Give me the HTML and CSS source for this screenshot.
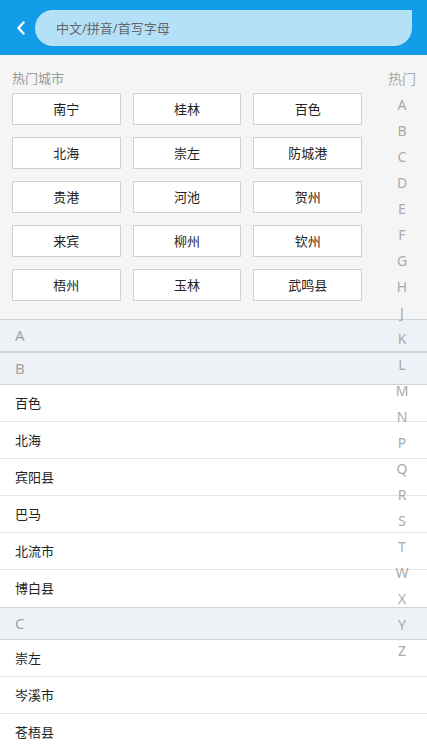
FILE: index.html
```html
<!DOCTYPE html>
<html lang="zh-CN">
<head>
    <meta charset="UTF-8">
    <meta name="viewport" content="width=device-width, initial-scale=1.0">
    <title>选择城市</title>
    <link rel="stylesheet" href="styles.css">
</head>
<body>
    <header class="topbar">
        <span class="back">
            <svg width="10" height="14" viewBox="0 0 10 14"><path d="M7.5 1.5 L2.5 7 L7.5 12.5" fill="none" stroke="#fff" stroke-width="2.4" stroke-linecap="round" stroke-linejoin="round"/></svg>
        </span>
        <div class="search">中文/拼音/首写字母</div>
    </header>

    <section class="hot">
        <div class="hot-title">热门城市</div>
        <div class="hot-grid">
            <div class="city-btn">南宁</div>
            <div class="city-btn">桂林</div>
            <div class="city-btn">百色</div>
            <div class="city-btn">北海</div>
            <div class="city-btn">崇左</div>
            <div class="city-btn">防城港</div>
            <div class="city-btn">贵港</div>
            <div class="city-btn">河池</div>
            <div class="city-btn">贺州</div>
            <div class="city-btn">来宾</div>
            <div class="city-btn">柳州</div>
            <div class="city-btn">钦州</div>
            <div class="city-btn">梧州</div>
            <div class="city-btn">玉林</div>
            <div class="city-btn">武鸣县</div>
        </div>
    </section>

    <div class="group-head">A</div>
    <div class="group-head">B</div>
    <ul class="city-list">
        <li>百色</li>
        <li>北海</li>
        <li>宾阳县</li>
        <li>巴马</li>
        <li>北流市</li>
        <li>博白县</li>
    </ul>
    <div class="group-head">C</div>
    <ul class="city-list">
        <li>崇左</li>
        <li>岑溪市</li>
        <li>苍梧县</li>
    </ul>

    <nav class="index-bar">
        <span>热门</span>
        <span>A</span><span>B</span><span>C</span><span>D</span><span>E</span>
        <span>F</span><span>G</span><span>H</span><span>J</span><span>K</span>
        <span>L</span><span>M</span><span>N</span><span>P</span><span>Q</span>
        <span>R</span><span>S</span><span>T</span><span>W</span><span>X</span>
        <span>Y</span><span>Z</span>
    </nav>
</body>
</html>
```

FILE: styles.css
```css
body {
    margin: 0;
    font-family: "Noto Sans", "Noto Sans CJK SC", sans-serif;
    background: #fff;
    color: #222;
    height: 747px;
    overflow: hidden;
}
.topbar {
    background: #139ce7;
    height: 55px;
    display: flex;
    align-items: center;
    padding: 0 15px 0 14px;
    box-sizing: border-box;
}
.back {
    width: 14px;
    display: flex;
    justify-content: center;
    margin-right: 7px;
}
.search {
    flex: 1;
    height: 36px;
    margin-top: 1px;
    background: #b5e1f8;
    border-radius: 18px 0 18px 18px;
    color: #666;
    font-size: 13px;
    line-height: 36px;
    padding-left: 21px;
}
.hot {
    background: #f5f5f5;
    padding: 13px 65px 18px 12px;
}
.hot-title {
    font-size: 13px;
    color: #999;
    line-height: 20px;
    margin-bottom: 5px;
}
.hot-grid {
    display: grid;
    grid-template-columns: repeat(3, 1fr);
    column-gap: 12px;
    row-gap: 12px;
}
.city-btn {
    height: 32px;
    box-sizing: border-box;
    border: 1px solid #cfcfcf;
    background: #fff;
    font-size: 13px;
    line-height: 30px;
    text-align: center;
    color: #222;
}
.group-head {
    height: 33px;
    box-sizing: border-box;
    background: #eef1f5;
    border-top: 1px solid #d0d3d6;
    border-bottom: 1px solid #d0d3d6;
    color: #a3a3a3;
    font-size: 15px;
    line-height: 31px;
    padding-left: 15px;
}
.city-list {
    list-style: none;
    margin: 0;
    padding: 0;
}
.city-list li {
    height: 37px;
    box-sizing: border-box;
    border-bottom: 1px solid #e6e6e6;
    font-size: 13px;
    line-height: 36px;
    padding-left: 15px;
}
.city-list li:last-child {
    border-bottom: none;
}
.index-bar {
    position: absolute;
    top: 66px;
    right: 0;
    width: 50px;
    display: flex;
    flex-direction: column;
    align-items: center;
    color: #aaa;
    font-size: 14px;
}
.index-bar span {
    height: 26px;
    line-height: 26px;
}
```
